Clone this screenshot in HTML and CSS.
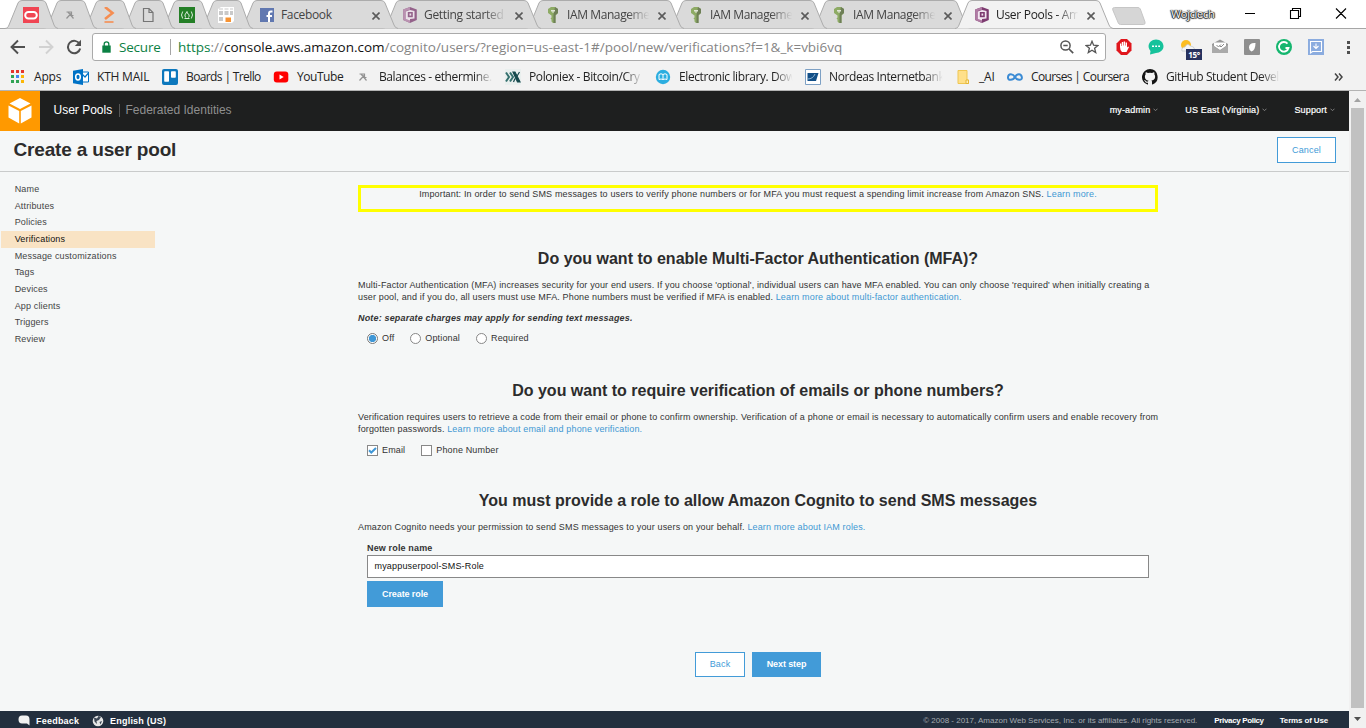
FILE: index.html
```html
<!DOCTYPE html>
<html lang="en">
<head>
<meta charset="utf-8">
<title>User Pools - Amazon Cognito</title>
<link rel="stylesheet" href="styles.css">
</head>
<body>
<svg class="defs" width="0" height="0">
  <symbol id="tab-wide" viewBox="0 0 158 29"><path d="M0 28.500C3 28 3 27 4 25L13 3Q14 .5 17 .5H141Q144 .5 145 3L154 25Q155 28 158 28.500"/></symbol>
  <symbol id="tab-pin" viewBox="0 0 53 29"><path d="M0 28.500C3 28 3 27 4 25L13 3Q14 .5 17 .5H37Q40 .5 41 3L49 25Q50 28 53 28.500"/></symbol>
  <symbol id="close" viewBox="0 0 8 8"><path d="M.5 .5L7.500 7.500M7.500 .5L.5 7.500" fill="none" stroke="#5a5a5a" stroke-width="1.600"/></symbol>
  <symbol id="pick" viewBox="0 0 16 16"><path d="M4.500 5H10M9.500 4.500V8M4.500 11.500L9.500 6M6 5L11.500 11.500M9 8.500H11.500" fill="none" stroke="#929292" stroke-width="1.200"/></symbol>
  <symbol id="key" viewBox="0 0 16 16"><path d="M6 0H10L13 2V6L10.500 8.500V16H8L6.500 14.500V12.500L5.500 11.500L6.500 10.500V8.500L3 6V2Z" fill="#759c3e"/><path d="M8.500 8V16H10.500V8L13 6V2L10 0Z" fill="#4b612c"/><path d="M6 3H10V4.500H8.500V6H7.500V4.500H6Z" fill="#e5ead9"/></symbol>
  <symbol id="cognito" viewBox="0 0 16 16"><path d="M8 0L14.800 2.500V13L8 16L1.200 13V2.500Z" fill="#7d3b70"/><path d="M8 0L1.200 2.500V13L8 16V13.500L3.800 12V4L8 2.800Z" fill="#b07ba4"/><path d="M3.800 4.500L8 3L12.500 4V11.500L8 12L8 13.500L3.800 12Z" fill="#f1e5ef"/><path d="M5.800 5H10.800V10.200H5.800Z" fill="#7d3b70"/><path d="M7.500 6.500H9.200V8.600H7.500Z" fill="#f1e5ef"/></symbol>
  <symbol id="caret" viewBox="0 0 5 4"><path d="M.5 .7L2.500 2.700L4.500 .7" fill="none" stroke="#888" stroke-width=".9"/></symbol>
</svg>

<div class="browser">
  <div class="tabstrip">
    <div class="tab pin z12"><svg class="shape"><use href="#tab-pin"/></svg>
      <svg class="fav" viewBox="0 0 16 16"><path fill="#f04553" d="M0 0H16V16H0Z"/><rect x="2.200" y="5" width="11.600" height="6.400" rx="3.200" fill="none" stroke="#fff" stroke-width="2"/></svg></div>
    <div class="tab pin z11"><svg class="shape"><use href="#tab-pin"/></svg><svg class="fav"><use href="#pick"/></svg></div>
    <div class="tab pin z10"><svg class="shape"><use href="#tab-pin"/></svg>
      <svg class="fav" viewBox="0 0 16 16"><path d="M4 0L11.500 6L4 12" fill="none" stroke="#f58d51" stroke-width="2.600"/><path d="M3.500 15H12.500" stroke="#f58d51" stroke-width="1.600"/></svg></div>
    <div class="tab pin z9"><svg class="shape"><use href="#tab-pin"/></svg>
      <svg class="fav" viewBox="0 0 16 16"><path d="M3.500 1.500H9L13 5.500V14.500H3.500ZM9 1.500V5.500H13" fill="none" stroke="#757575" stroke-width="1.200"/></svg></div>
    <div class="tab pin z8"><svg class="shape"><use href="#tab-pin"/></svg>
      <svg class="fav" viewBox="0 0 16 16"><path fill="#247f26" d="M0 0H16V16H0Z"/><path d="M3.700 4.500Q1.300 8 3.700 11.500M12.300 4.500Q14.700 8 12.300 11.500M5.500 11.500H10.500M8 4.500Q4.500 8.500 6.500 10.500M8 4.500Q8 7 10 7.500Q10.500 9.500 9.500 10.500" fill="none" stroke="#dcebdc"/></svg></div>
    <div class="tab pin z7"><svg class="shape"><use href="#tab-pin"/></svg>
      <svg class="fav" viewBox="0 0 16 16"><path fill="#fff" d="M0 2L3 0H16V14L14 16H0Z"/><path fill="#c9c9c9" d="M1 1.500H5V2.500H1ZM6.500 1.500H10.500V2.500H6.500ZM12 1.500H15V2.500H12ZM1 4H5V8H1ZM6.500 4H10.500V8H6.500ZM1 10H5V14H1ZM12 4H15V8H12Z"/><path fill="#f79333" d="M7.500 10.500H13V15H7.500Z"/></svg></div>
    <div class="tab z6"><svg class="shape"><use href="#tab-wide"/></svg>
      <svg class="fav" viewBox="0 0 16 16"><path fill="#6178b0" d="M1 1H15V15H1Z"/><path d="M10 15V6.500Q10 4.500 12 4.500H13.500M7.500 9H13" fill="none" stroke="#fff" stroke-width="2"/></svg><span class="label fb">Facebook</span><svg class="x"><use href="#close"/></svg></div>
    <div class="tab z5"><svg class="shape"><use href="#tab-wide"/></svg><svg class="fav dim"><use href="#cognito"/></svg><span class="label gs">Getting started</span><svg class="x"><use href="#close"/></svg></div>
    <div class="tab z4"><svg class="shape"><use href="#tab-wide"/></svg><svg class="fav dim2"><use href="#key"/></svg><span class="label iam">IAM Manageme</span><svg class="x"><use href="#close"/></svg></div>
    <div class="tab z3"><svg class="shape"><use href="#tab-wide"/></svg><svg class="fav dim2"><use href="#key"/></svg><span class="label iam">IAM Manageme</span><svg class="x"><use href="#close"/></svg></div>
    <div class="tab z2"><svg class="shape"><use href="#tab-wide"/></svg><svg class="fav dim2"><use href="#key"/></svg><span class="label iam">IAM Manageme</span><svg class="x"><use href="#close"/></svg></div>
    <div class="tab active"><svg class="shape"><use href="#tab-wide"/></svg><svg class="fav"><use href="#cognito"/></svg><span class="label up">User Pools - Am</span><svg class="x"><use href="#close"/></svg></div>
    <svg class="newtab" viewBox="0 0 36 18"><path d="M3.500 .5H27Q28.500 .5 29.300 2L34 15Q34.500 17.500 32.500 17.500H9.500Q8 17.500 7.300 16L1.800 3Q1 .5 3.500 .5Z" fill="#d6d6d6" stroke="#c6c6c6"/></svg>
    <span class="profile">Wojciech</span>
    <svg class="winctl" viewBox="0 0 110 29"><path d="M8 13.500H18M53.500 10.500H61.500V18.500H53.500ZM55.500 10V8.500H63.500V16.500H62M99 8.500L109 18.500M109 8.500L99 18.500" fill="none" stroke="#000" stroke-width="1.100"/></svg>
  </div>

  <div class="toolbar">
    <div class="nav">
      <svg viewBox="0 0 16 16"><path d="M15 8H2M8 1.500L1.500 8L8 14.500" fill="none" stroke="#505050" stroke-width="1.900"/></svg>
      <svg viewBox="0 0 16 16"><path d="M1 8H14M8 1.500L14.500 8L8 14.500" fill="none" stroke="#d2d2d2" stroke-width="1.900"/></svg>
      <svg viewBox="0 0 16 16"><path d="M13.600 5A6.200 6.200 0 1 0 14.200 9.500" fill="none" stroke="#505050" stroke-width="2"/><path d="M15 .8V7H8.800Z" fill="#505050"/></svg>
    </div>
    <div class="omnibox">
      <svg class="lock" viewBox="0 0 9 12"><path d="M.3 4.500H8.700V11.700H.3Z" fill="#0b8043"/><path d="M2.200 5V3Q2.200 .8 4.500 .8T6.800 3V5" fill="none" stroke="#0b8043" stroke-width="1.300"/></svg>
      <span class="secure">Secure</span><span class="bar"></span>
      <span class="url"><i>https</i>://<b>console.aws.amazon.com</b>/cognito/users/?region=us-east-1#/pool/new/verifications?f=1&amp;_k=vbi6vq</span>
      <svg class="mag" viewBox="0 0 14 14"><circle cx="5.500" cy="5.500" r="4.600" fill="none" stroke="#555" stroke-width="1.500"/><path d="M3.300 5.500H7.700M9 9L13.200 13.200" stroke="#555" stroke-width="1.700"/></svg>
      <svg class="star" viewBox="0 0 14 14"><path d="M7 1.300L8.600 5.200L12.900 5.500L9.600 8.200L10.700 12.500L7 10.200L3.300 12.500L4.400 8.200L1.100 5.500L5.400 5.200Z" fill="none" stroke="#555" stroke-width="1.300"/></svg>
    </div>
    <div class="exts">
      <svg viewBox="0 0 16 16"><path d="M5 0H11L15.500 4.500V11.500L11 16H5L.5 11.500V4.500Z" fill="#e0161d"/><path d="M4 8V4.500H5.300V7H5.800V3H7.200V6.500H7.700V2.500H9.100V6.500H9.600V3.500H11V8.500L12 7.500L13 8L10.500 13H6Q4 11.500 4 8Z" fill="#fff"/></svg>
      <svg viewBox="0 0 16 16"><path d="M8 .5C12.500 .5 15.500 3.500 15.500 7.300S12 14 8 14L2 15.500L2.500 12C-2 7 2 .5 8 .5Z" fill="#16c29b"/><path d="M4 6.500H6V8H4ZM7.200 6.500H9V8H7.200ZM10.200 6.500H12V8H10.200Z" fill="#fff"/></svg>
      <div class="weather"><svg viewBox="0 0 16 16"><circle cx="6" cy="6" r="5" fill="#fcbd22"/><path d="M2 12Q1 8.500 5 8Q7 3.500 10.500 7Q14 7 15 11V12Z" fill="#f5f5f5" stroke="#c4ccd2" stroke-width=".8"/></svg><span>15°</span></div>
      <svg viewBox="0 0 16 16"><path d="M0 5L8 .5L16 5V14H0Z" fill="#999"/><path d="M2 3.500H14V7L8 11L2 7Z" fill="#fff"/><path d="M0 6L8 11.500L16 6V14H0Z" fill="#aaa"/><path d="M4.500 6L6.500 8L9 5.500M7.500 6.500L9 8L12 5" fill="none" stroke="#888"/></svg>
      <svg viewBox="0 0 16 16"><rect width="16" height="16" rx="1" fill="#8f8f8f"/><path d="M11.500 4Q5 3.500 5 8.500Q5 11.500 7.500 12.500Q11.500 11 11.500 4Z" fill="#fff"/></svg>
      <svg viewBox="0 0 16 16"><circle cx="8" cy="8" r="8" fill="#15b66f"/><path d="M11.500 4.700A4.800 4.800 0 1 0 12.500 9H9.500" fill="none" stroke="#fff" stroke-width="1.800"/></svg>
      <svg viewBox="0 0 16 16"><path d="M0 0H16V16H0Z" fill="#8bacdf"/><path d="M3 2.500H13.500V12.500H4.500L2.500 14V2.500ZM8 4.500V9M5.500 7L8 9.500L10.500 7" fill="none" stroke="#fff" stroke-width="1.100"/></svg>
      <svg viewBox="0 0 16 16"><path d="M7 2H10V5H7ZM7 7H10V10H7ZM7 12H10V15H7Z" fill="#505050"/></svg>
    </div>
  </div>

  <div class="bookmarks">
    <div class="bm apps"><svg viewBox="0 0 16 16"><path fill="#e5352d" d="M1 1H4V4H1ZM6 1H9V4H6ZM11 1H14V4H11Z"/><path fill="#31a354" d="M1 6H4V9H1ZM1 11H4V14H1ZM6 11H9V14H6Z"/><path fill="#4285f4" d="M6 6H9V9H6Z"/><path fill="#fbb605" d="M11 6H14V9H11ZM11 11H14V14H11Z"/></svg><span>Apps</span></div>
    <div class="bm"><svg viewBox="0 0 16 16"><path d="M9 3H15.500V13H9Z" fill="#fff" stroke="#0072c6"/><path d="M9 5L12 8L15.500 4" fill="none" stroke="#0072c6" stroke-width="1.200"/><path d="M0 1.800L10 0V16L0 14.200Z" fill="#0072c6"/><ellipse cx="5" cy="8" rx="2.300" ry="2.900" fill="none" stroke="#fff" stroke-width="1.500"/></svg><span>KTH MAIL</span></div>
    <div class="bm tight"><svg viewBox="0 0 16 16"><rect width="16" height="16" rx="2" fill="#0d78bd"/><rect x="2.200" y="2.300" width="4.800" height="10.500" rx=".7" fill="#fff"/><rect x="9" y="2.300" width="4.800" height="6.500" rx=".7" fill="#fff"/></svg><span>Boards | Trello</span></div>
    <div class="bm yt"><svg viewBox="0 0 16 16"><rect x=".8" y="2.500" width="14.500" height="11" rx="3" fill="#f00"/><path d="M6.500 5.500V10.500L10.700 8Z" fill="#fff"/></svg><span>YouTube</span></div>
    <div class="bm snug"><svg><use href="#pick"/></svg><span class="fade">Balances - ethermine.</span></div>
    <div class="bm snug"><svg viewBox="0 0 16 16"><path d="M0 0H16V16H0Z" fill="#e9efee"/><path d="M1 3.500L4 8L1 12.500M5 3.500L8 8L5 12.500" fill="none" stroke="#35706e" stroke-width="2"/><path d="M8 3H10L15 13H12.500ZM14.500 3L11.500 8M10 9.500L8.500 13" fill="#16494d" stroke="#16494d" stroke-width="1.200"/></svg><span class="fade">Poloniex - Bitcoin/Cry</span></div>
    <div class="bm snug"><svg viewBox="0 0 16 16"><circle cx="8" cy="8" r="7.200" fill="#2caee0"/><path d="M4 5.500Q6 4 8 5.500Q10 4 12 5.500V10.500Q10 9.500 8 10.500Q6 9.500 4 10.500ZM8 5.500V10.500" fill="none" stroke="#fff"/></svg><span class="fade">Electronic library. Dow</span></div>
    <div class="bm snug"><svg viewBox="0 0 16 16"><path d="M.5 .5H15.500V15.500H.5Z" fill="#fff" stroke="#7da0c4"/><path d="M2.500 4H13.500L11 12H2.500Z" fill="#124f87"/><path d="M2.500 10Q8 10 10 5" fill="none" stroke="#8db2d2"/></svg><span class="fade">Nordeas Internetbank</span></div>
    <div class="bm"><svg viewBox="0 0 16 16"><path d="M3 1.500H12V11H13.500V14.500H3Z" fill="#ffe08a" stroke="#efc652"/><path d="M11 11H13.500V14.500H11Z" fill="#fff0bc" stroke="#e5b637"/></svg><span>_AI</span></div>
    <div class="bm tight"><svg viewBox="0 0 16 16"><path d="M8 8C6 4.500 1.500 4 1 8S6 11.500 8 8S14 4 14.800 8S10 11.500 8 8Z" fill="none" stroke="#3b8bd4" stroke-width="2"/></svg><span>Courses | Coursera</span></div>
    <div class="bm snug"><svg viewBox="0 0 16 16"><path fill="#151515" d="M8 0a8 8 0 0 0-2.500 15.600c.4.100.5-.2.500-.4v-1.500c-2.200.5-2.700-1-2.700-1-.4-.9-.9-1.200-.9-1.200-.7-.5.1-.5.1-.5.8.1 1.200.8 1.200.8.700 1.200 1.900.9 2.300.7.100-.5.300-.9.500-1.100-1.800-.2-3.600-.9-3.600-4 0-.9.300-1.600.8-2.100-.1-.2-.4-1 .1-2.100 0 0 .7-.2 2.200.8a7.600 7.600 0 0 1 4 0c1.500-1 2.200-.8 2.200-.8.4 1.100.2 1.900.1 2.100.5.600.8 1.300.8 2.100 0 3.100-1.900 3.700-3.700 3.900.3.300.6.800.6 1.500v2.200c0 .2.100.5.600.4A8 8 0 0 0 8 0z"/></svg><span class="fade">GitHub Student Devel</span></div>
    <svg class="more" viewBox="0 0 9 8"><path d="M1 .5L4 4L1 7.500M5 .5L8 4L5 7.500" fill="none" stroke="#444" stroke-width="1.500"/></svg>
  </div>
</div>

<div class="viewport">
  <div class="page">
    <header class="topnav">
      <div class="logo"><svg viewBox="0 0 24 26"><path d="M12 0L22.500 5.500L12 11L1.500 5.500ZM.5 7.500L11.200 13V25.500L.5 19.500ZM23.500 7.500L12.800 13V25.500L23.500 19.500Z" fill="#fff"/></svg></div>
      <span class="t-pools">User Pools</span><span class="t-sep"></span><span class="t-fed">Federated Identities</span>
      <nav class="menus">
        <span class="m1">my-admin</span><svg><use href="#caret"/></svg>
        <span class="m2">US East (Virginia)</span><svg><use href="#caret"/></svg>
        <span class="m3">Support</span><svg><use href="#caret"/></svg>
      </nav>
    </header>
    <div class="titlebar"><h1>Create a user pool</h1><button class="btn ghost cancel">Cancel</button></div>
    <div class="columns">
      <ul class="steps">
        <li><span>Name</span></li><li><span>Attributes</span></li><li><span>Policies</span></li><li class="on"><span>Verifications</span></li><li><span>Message customizations</span></li><li><span>Tags</span></li><li><span>Devices</span></li><li><span>App clients</span></li><li><span>Triggers</span></li><li><span>Review</span></li>
      </ul>
      <main>
        <div class="notice"><span>Important: In order to send SMS messages to users to verify phone numbers or for MFA you must request a spending limit increase from Amazon SNS. <a>Learn more.</a></span></div>
        <section class="mfa">
          <h2>Do you want to enable Multi-Factor Authentication (MFA)?</h2>
          <p><span>Multi-Factor Authentication (MFA) increases security for your end users. If you choose 'optional', individual users can have MFA enabled. You can only choose 'required' when initially creating a</span><br><span>user pool, and if you do, all users must use MFA. Phone numbers must be verified if MFA is enabled. <a>Learn more about multi-factor authentication.</a></span></p>
          <p class="note"><span>Note: separate charges may apply for sending text messages.</span></p>
          <div class="opts radios"><i class="radio sel"></i><span>Off</span><i class="radio"></i><span>Optional</span><i class="radio"></i><span>Required</span></div>
        </section>
        <section class="verify">
          <h2>Do you want to require verification of emails or phone numbers?</h2>
          <p><span>Verification requires users to retrieve a code from their email or phone to confirm ownership. Verification of a phone or email is necessary to automatically confirm users and enable recovery from</span><br><span>forgotten passwords. <a>Learn more about email and phone verification.</a></span></p>
          <div class="opts checks"><i class="check"><svg viewBox="0 0 9 9"><path d="M1 4.200L3.300 6.500L8 2" fill="none" stroke="#3f97d6" stroke-width="2"/></svg></i><span>Email</span><i class="check"></i><span>Phone Number</span></div>
        </section>
        <section class="role">
          <h2>You must provide a role to allow Amazon Cognito to send SMS messages</h2>
          <p><span>Amazon Cognito needs your permission to send SMS messages to your users on your behalf. <a>Learn more about IAM roles.</a></span></p>
          <div class="field"><label>New role name</label><div class="input"><span>myappuserpool-SMS-Role</span></div><button class="btn solid create">Create role</button></div>
        </section>
        <div class="actions"><button class="btn ghost back">Back</button><button class="btn solid next">Next step</button></div>
      </main>
    </div>
    <footer>
      <svg class="bubble" viewBox="0 0 12 11"><path d="M4 .5H8Q11.500 .5 11.500 4.500V10.500L9 8.500H4Q.5 8.500 .5 4.500T4 .5Z" fill="#f1f1f1"/></svg><span class="feedback">Feedback</span>
      <svg class="globe" viewBox="0 0 12 12"><circle cx="6" cy="6" r="5.300" fill="#e5e5e5"/><path d="M2 2.500L5 3.500L6.500 1L9 2L7 5L4.500 6L5 9L2.500 6.500ZM7.500 7L10 6L8.500 9.500Z" fill="#3c4755"/></svg><span class="lang">English (US)</span>
      <span class="copy">© 2008 - 2017, Amazon Web Services, Inc. or its affiliates. All rights reserved.</span><span class="priv">Privacy Policy</span><span class="terms">Terms of Use</span>
    </footer>
  </div>
  <div class="scrollbar"><svg viewBox="0 0 17 17"><path d="M5 11H12L8.500 7Z" fill="#a3a3a3"/></svg><div class="thumb"></div><svg viewBox="0 0 17 17"><path d="M5 6H12L8.500 10Z" fill="#505050"/></svg></div>
</div>
</body>
</html>
```
FILE: styles.css
```css
* { box-sizing: border-box; }
body { margin: 0; width: 1366px; height: 728px; overflow: hidden; font-family: "Liberation Sans", Arial, sans-serif; color: #333; }
svg { display: block; flex: none; }
span { white-space: nowrap; }
.defs { position: absolute; }

/* browser chrome */
.browser { height: 91px; background: #f2f2f2; border-bottom: 1px solid #b3b3b3; font-family: "Open Sans", "Noto Sans", sans-serif; font-size: 12px; }
.tabstrip { height: 29px; display: flex; background: #fff; padding-left: 5px; box-shadow: inset 0 -1px #a6a6a6; isolation: isolate; }
.tab { position: relative; width: 158px; height: 29px; margin-right: -15px; padding-left: 19px; display: flex; align-items: center; flex: none; isolation: isolate; }
.tab.pin { width: 53px; margin-right: -14px; padding-left: 18px; }
.tab.z7 { margin-right: -13px; }
.shape { position: absolute; inset: 0; width: 100%; height: 29px; fill: #dadada; stroke: #acacac; z-index: -1; }
.z12 { z-index: 12; } .z11 { z-index: 11; } .z10 { z-index: 10; } .z9 { z-index: 9; } .z8 { z-index: 8; } .z7 { z-index: 7; }
.z6 { z-index: 6; } .z5 { z-index: 5; } .z4 { z-index: 4; } .z3 { z-index: 3; } .z2 { z-index: 2; }
.active { z-index: 20; }
.active .shape { fill: #f2f2f2; }
.fav { width: 16px; height: 16px; margin-top: 1px; }
.dim, .dim2 { opacity: .75; }
.label { width: 84px; margin: 0 -4px 0 6px; color: #444; height: 20px; line-height: 20px; letter-spacing: -.35px; mask-image: linear-gradient(90deg, #000 72%, transparent 98%); }
.iam { letter-spacing: -.4px; }
.gs, .up { letter-spacing: -.3px; }
.active .label { color: #222; }
.x { width: 8px; height: 8px; margin-left: 11px; margin-top: 2px; }
.fb { mask-image: none; }
.newtab { width: 36px; height: 18px; margin: 7px 0 0 13px; }
.profile { margin: 5px 0 0 24px; width: 46px; height: 18px; line-height: 18px; font-size: 11px; letter-spacing: -.3px; color: #fff; text-shadow: 0 0 1px #000, 1px 0 1px #222, -1px 0 1px #222, 0 1px 1px #222; }
.winctl { width: 110px; height: 29px; margin-left: 20px; }

.toolbar { height: 36px; display: flex; align-items: center; padding-left: 10px; }
.nav { width: 82px; display: flex; gap: 12px; }
.nav svg { width: 16px; height: 16px; }
.omnibox { width: 1014px; height: 28px; border: 1px solid #aaa; border-radius: 3px; background: #fff; display: flex; align-items: center; padding-left: 9px; flex: none; }
.lock { width: 9px; height: 12px; }
.secure { margin-left: 8px; color: #0b8043; width: 42px; font-size: 13.500px; letter-spacing: -.2px; }
.bar { width: 1px; height: 16px; background: #a5a5a5; margin: 0 7px 0 9px; }
.url { color: #858585; width: 882px; font-size: 13.500px; letter-spacing: -.01px; }
.url i { font-style: normal; color: #0b8043; }
.url b { font-weight: 400; color: #111; }
.mag { width: 14px; height: 14px; }
.star { width: 14px; height: 14px; margin-left: 11px; }
.exts { display: flex; gap: 16px; padding-left: 10px; }
.exts svg { width: 16px; height: 16px; }
.weather { position: relative; width: 16px; }
.weather span { position: absolute; left: 6px; top: 10px; width: 16px; height: 11px; background: #27325f; color: #fff; font-size: 8px; line-height: 11px; font-weight: 700; letter-spacing: -.3px; text-align: center; }

.bookmarks { height: 25px; padding: 0 0 2px 9px; display: grid; grid-template-columns: 63px 89px 111px 82px 150px 150px 150px 150px 52px 135px 193px 9px; align-items: center; }
.bm { display: flex; align-items: center; gap: 8px; color: #222; }
.bm svg { width: 16px; height: 16px; margin-left: 1px; margin-right: -1px; }
.bm span { letter-spacing: -.2px; margin-left: 1px; }
.bm.tight span { letter-spacing: -.62px; }
.bm.yt span { letter-spacing: -.45px; }
.bm.snug span { letter-spacing: -.4px; }
.bm .fade { width: 116px; margin-right: -6px; mask-image: linear-gradient(90deg, #000 82%, transparent 98%); }
.more { width: 9px; height: 8px; }

/* console page */
.viewport { display: flex; height: 637px; }
.page { width: 1349px; background: #f5f7f7; display: flex; flex-direction: column; }
.topnav { height: 40px; background: #1e1f1f; display: flex; align-items: center; font-size: 12px; flex: none; }
.logo { width: 40px; height: 40px; background: #f90; display: grid; place-items: center; }
.logo svg { width: 24px; height: 26px; }
.t-pools { color: #fff; margin-left: 13.500px; width: 65px; margin-top: -3px; }
.t-sep { width: 1px; height: 13px; background: #555; margin-top: -1px; }
.t-fed { color: #8f8f8f; margin-left: 6px; margin-top: -3px; }
.menus { margin-left: auto; display: flex; align-items: center; color: #fff; font-size: 9px; letter-spacing: .15px; padding-right: 14px; margin-top: -2px; -webkit-text-stroke: .2px #fff; }
.menus svg { width: 5px; height: 4px; margin-left: 3px; }
.m2, .m3 { margin-left: 27px; }
.titlebar { height: 41px; display: flex; border-bottom: 1px solid #c9cbcb; flex: none; }
h1 { font-size: 19px; line-height: 22px; margin: 8px 0 0 13.500px; width: 1263.500px; color: #2c2c2c; letter-spacing: -.17px; }
.btn { font: 9px/12px "Liberation Sans", Arial, sans-serif; border: 1px solid #429bd8; padding: 0; border-radius: 0; display: block; }
.ghost { background: #fff; color: #429bd8; letter-spacing: .15px; }
.solid { background: #429bd8; color: #fff; font-weight: 700; letter-spacing: -.1px; }
.cancel { width: 59px; height: 26px; margin-top: 6px; }
.columns { display: flex; height: 539px; }
.steps { list-style: none; margin: 9px 0 0; padding: 0 0 0 1px; width: 358px; font-size: 9px; letter-spacing: .15px; color: #444; }
.steps li { height: 16.670px; line-height: 16.670px; padding-left: 13.700px; width: 154px; }
.steps .on { background: #f9e3c4; color: #111; }
main { width: 800px; padding-top: 13px; font-size: 9px; line-height: 12px; letter-spacing: .15px; }
a { color: #4197d3; }
.notice { height: 27px; border: 3px solid #ff0; text-align: center; letter-spacing: .163px; }
h2 { margin: 0; font-size: 16px; line-height: 20px; text-align: center; color: #2c2c2c; letter-spacing: 0; padding-top: 1px; margin-bottom: -1px; }
p { margin: 0; }
.mfa { padding-top: 36px; height: 168px; }
.mfa p { padding-top: 11px; }
.mfa .note { padding-top: 9px; font-style: italic; font-weight: 700; letter-spacing: .17px; }
.opts { display: flex; align-items: center; height: 12px; padding-left: 9px; }
.radios { margin-top: 8px; }
.radio { width: 11px; height: 11px; border: 1px solid #888; border-radius: 50%; background: #fff; margin-right: 4px; }
.radio.sel { border-color: #777; background: radial-gradient(circle, #3f97d6 3.300px, #fff 4px); }
.opts span + i { margin-left: 16px; }
.verify { height: 110px; }
.verify p { padding-top: 11px; }
.checks { margin-top: 9px; }
.check { width: 11px; height: 11px; border: 1px solid #888; background: #fff; margin-right: 4px; }
.check svg { width: 9px; height: 9px; }
.role { height: 162px; }
.role p { padding-top: 11px; }
.field { padding: 9px 9px 0; }
label { display: block; font-weight: 700; height: 13px; }
.input { height: 23px; border: 1px solid #888; background: #fff; padding-left: 6.500px; line-height: 21px; color: #111; margin-bottom: 3px; letter-spacing: .18px; }
.create { width: 76px; height: 26px; }
.actions { display: flex; justify-content: center; gap: 7px; }
.back { width: 50px; height: 25px; padding-bottom: 2px; } .next { width: 69px; height: 25px; padding-bottom: 2px; }
footer { height: 17px; background: #232f3e; display: flex; align-items: center; color: #fff; font-size: 9px; padding: 2px 0 0 18px; font-weight: 700; letter-spacing: .22px; }
.bubble { width: 12px; height: 11px; }
.feedback { margin-left: 6px; width: 44px; }
.globe { width: 12px; height: 12px; margin-left: 12px; }
.lang { margin-left: 6px; }
.copy { margin-left: auto; color: #a5abb1; font-weight: 400; font-size: 8px; letter-spacing: 0; }
.priv { margin-left: 17px; font-size: 8px; letter-spacing: -.35px; }
.terms { margin: 0 21px 0 16px; font-size: 8px; letter-spacing: -.15px; }
.scrollbar { width: 17px; background: #f1f1f1; display: flex; flex-direction: column; }
.scrollbar svg { width: 17px; height: 17px; }
.thumb { height: 600px; width: 13px; margin: 0 2px 3px; background: #c1c1c1; }
```
